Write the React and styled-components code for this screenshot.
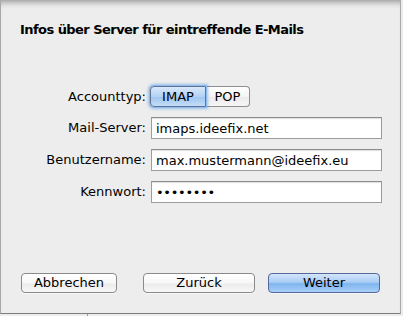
import React from "react";
import styled, { createGlobalStyle } from "styled-components";

const Global = createGlobalStyle`
  html, body { margin: 0; padding: 0; }
  body {
    width: 403px; height: 316px; overflow: hidden;
    background: #e9e9e9;
    font-family: "DejaVu Sans", "Liberation Sans", sans-serif;
    font-size: 13px; color: #000;
  }
`;

const Backdrop = styled.div`
  position: relative;
  width: 403px;
  height: 316px;
  background: linear-gradient(to right, #ececec 0, #ececec 87px, #9a9a9a 87px, #9a9a9a 88px, #ececec 88px);
`;

const Sheet = styled.div`
  box-sizing: border-box;
  width: 401px;
  height: 314px;
  display: flex;
  flex-direction: column;
  background: #ededed;
  border-left: 1px solid #a9a9a9;
  border-right: 1px solid #a9a9a9;
  border-bottom: 1px solid #7d7d7d;
  box-shadow: inset 0 7px 6px -5px rgba(0, 0, 0, 0.38);
`;

const Title = styled.h1`
  margin: 22px 0 0 19px;
  font-size: 13px;
  line-height: 16px;
  font-weight: bold;
  letter-spacing: -0.55px;
`;

const Form = styled.div`
  display: grid;
  grid-template-columns: 145px 232px;
  column-gap: 4px;
  row-gap: 10px;
  align-items: center;
  margin-top: 48px;
`;

const Label = styled.label`
  text-align: right;
  line-height: 16px;
`;

const Segmented = styled.div`
  display: flex;
  height: 21px;
  width: 100px;
`;

const Segment = styled.div`
  box-sizing: border-box;
  width: ${(p) => p.$w}px;
  height: 21px;
  display: flex;
  align-items: center;
  justify-content: center;
  line-height: 16px;
  border: 1px solid ${(p) => (p.$active ? "#5f7394" : "#8e8e8e")};
  border-left-width: ${(p) => (p.$first ? 1 : 0)}px;
  border-radius: ${(p) => (p.$first ? "4px 0 0 4px" : "0 4px 4px 0")};
  background: ${(p) =>
    p.$active
      ? "linear-gradient(#d9e8fa, #b4d2f3 50%, #9fc5ef 52%, #c3dcf7)"
      : "linear-gradient(#ffffff, #f4f4f4 50%, #ebebeb 52%, #f6f6f6)"};
  box-shadow: ${(p) =>
    p.$active ? "0 0 0 1px #8dbcf0, 0 0 3px 2px rgba(94, 156, 230, 0.55)" : "none"};
  position: relative;
  z-index: ${(p) => (p.$active ? 1 : 0)};
`;

const Field = styled.input`
  box-sizing: border-box;
  width: 231px;
  height: 22px;
  margin: 0 0 0 1px;
  padding: 0 0 0 4px;
  border: 1px solid #9c9c9c;
  border-top-color: #8a8a8a;
  box-shadow: inset 0 1px 1px rgba(0, 0, 0, 0.12);
  background: #fff;
  font-family: inherit;
  font-size: 13px;
  color: #000;
  outline: none;
  letter-spacing: ${(p) => (p.$secret ? "-0.3px" : "0")};
`;

const Footer = styled.div`
  margin-top: auto;
  margin-bottom: 20px;
  display: flex;
  justify-content: space-between;
  padding: 0 20px 0 20px;
`;

const Group = styled.div`
  display: flex;
  gap: 13px;
`;

const Button = styled.button`
  box-sizing: border-box;
  width: ${(p) => p.$w}px;
  height: 20px;
  padding: 0;
  font-family: inherit;
  font-size: 13px;
  line-height: 16px;
  color: #000;
  border-radius: 4px;
  border: 1px solid ${(p) => (p.$primary ? "#56689a" : "#8a8a8a")};
  background: ${(p) =>
    p.$primary
      ? "linear-gradient(#d3e5fb, #a9cdf5 45%, #7fb4ef 55%, #a8d1f7)"
      : "linear-gradient(#ffffff, #f7f7f7 50%, #ececec 55%, #f7f7f7)"};
  box-shadow: 0 1px 0 rgba(255, 255, 255, 0.6);
`;

export default function App() {
  return (
    <>
      <Global />
      <Backdrop>
        <Sheet>
          <Title>Infos über Server für eintreffende E-Mails</Title>
          <Form>
            <Label>Accounttyp:</Label>
            <Segmented>
              <Segment $w={56} $first $active>IMAP</Segment>
              <Segment $w={44}>POP</Segment>
            </Segmented>
            <Label>Mail-Server:</Label>
            <Field readOnly value="imaps.ideefix.net" />
            <Label>Benutzername:</Label>
            <Field readOnly value="max.mustermann@ideefix.eu" />
            <Label>Kennwort:</Label>
            <Field readOnly $secret value="••••••••" />
          </Form>
          <Footer>
            <Button $w={96}>Abbrechen</Button>
            <Group>
              <Button $w={112}>Zurück</Button>
              <Button $w={112} $primary>Weiter</Button>
            </Group>
          </Footer>
        </Sheet>
      </Backdrop>
    </>
  );
}
